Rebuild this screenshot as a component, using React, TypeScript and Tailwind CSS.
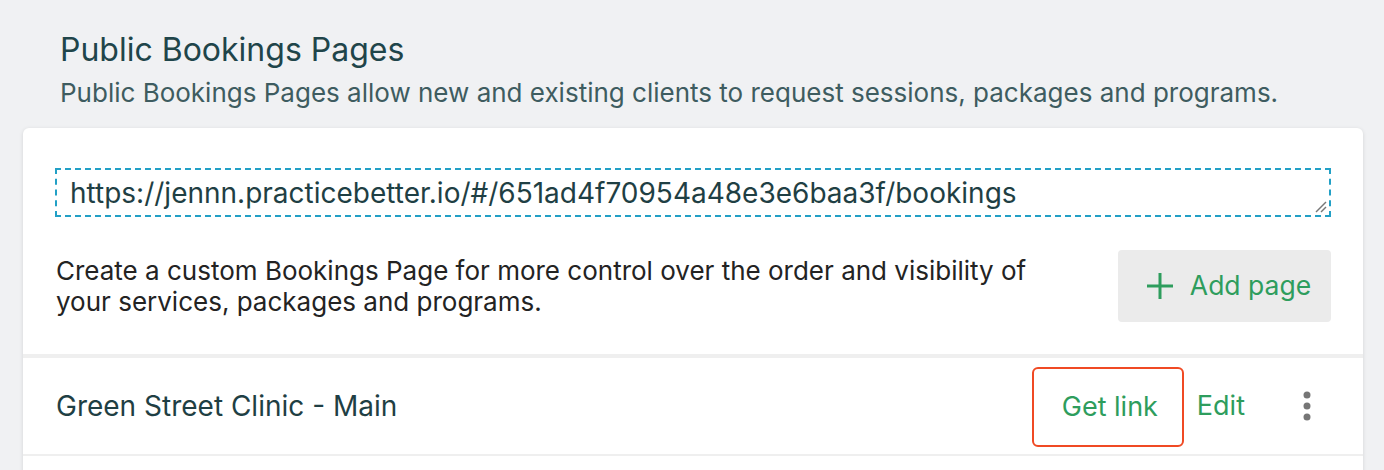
export default function App() {
  return (
    <div
      className="w-full h-[470px] overflow-hidden bg-[#f0f1f3] pl-[23px] pr-[21px]"
      style={{ fontFamily: "Inter, 'Noto Sans', sans-serif" }}
    >
      {/* header */}
      <div className="pl-[37px] pt-[30px]">
        <h2 className="text-[32px] leading-[40px] text-[#1f454a]">Public Bookings Pages</h2>
        <p className="mt-[7px] text-[26px] leading-[32px] text-[#3e5c60]">
          Public Bookings Pages allow new and existing clients to request sessions, packages and programs.
        </p>
      </div>

      {/* card */}
      <div className="mt-[19px] bg-white rounded-t-[6px] shadow-[0_1px_4px_rgba(0,0,0,0.12)]">
        <div className="px-[32px] pt-[40px] pb-[32px]">
          <div className="relative h-[49px] border-2 border-dashed border-[#22a0c6] flex items-center px-[13px]">
            <span className="text-[28px] text-[#1f3f44] whitespace-nowrap">
              https://jennn.practicebetter.io/#/651ad4f70954a48e3e6baa3f/bookings
            </span>
            <svg className="absolute right-[2px] bottom-[2px]" width="12" height="12" viewBox="0 0 12 12">
              <line x1="1" y1="11" x2="11" y2="1" stroke="#777" strokeWidth="1.4" />
              <line x1="6" y1="11" x2="11" y2="6" stroke="#777" strokeWidth="1.4" />
            </svg>
          </div>

          <div className="mt-[33px] flex items-center justify-between">
            <p className="pl-[1px] text-[26px] leading-[31px] text-[#232323] max-w-[1000px]">
              Create a custom Bookings Page for more control over the order and visibility of your services, packages
              and programs.
            </p>
            <button className="w-[213px] h-[72px] pl-[8px] rounded-[4px] bg-[#ebebeb] flex items-center justify-center gap-[16px] text-[26.5px] text-[#2e9d5d]">
              <svg width="28" height="28" viewBox="0 0 28 28">
                <line x1="14" y1="1" x2="14" y2="27" stroke="#2e9d5d" strokeWidth="3" />
                <line x1="1" y1="14" x2="27" y2="14" stroke="#2e9d5d" strokeWidth="3" />
              </svg>
              <span>Add page</span>
            </button>
          </div>
        </div>

        <div className="h-[4px] bg-[#efefef]" />

        <div className="h-[98px] flex items-center pl-[33px] pr-[46px] border-b-2 border-[#efefef]">
          <span className="flex-1 text-[28px] text-[#1f3f44]">Green Street Clinic - Main</span>
          <button className="w-[152px] h-[80px] mt-[2px] pl-[4px] border-2 border-[#f04a24] rounded-[6px] text-[27px] text-[#2e9d5d]">
            Get link
          </button>
          <button className="ml-[13px] text-[27px] text-[#2e9d5d]">Edit</button>
          <button className="ml-[52px] w-[20px] h-[40px] flex items-center justify-center">
            <svg width="8" height="30" viewBox="0 0 8 30">
              <circle cx="4" cy="4" r="3.5" fill="#767676" />
              <circle cx="4" cy="15" r="3.5" fill="#767676" />
              <circle cx="4" cy="26" r="3.5" fill="#767676" />
            </svg>
          </button>
        </div>
        <div className="h-[40px]" />
      </div>
    </div>
  );
}
